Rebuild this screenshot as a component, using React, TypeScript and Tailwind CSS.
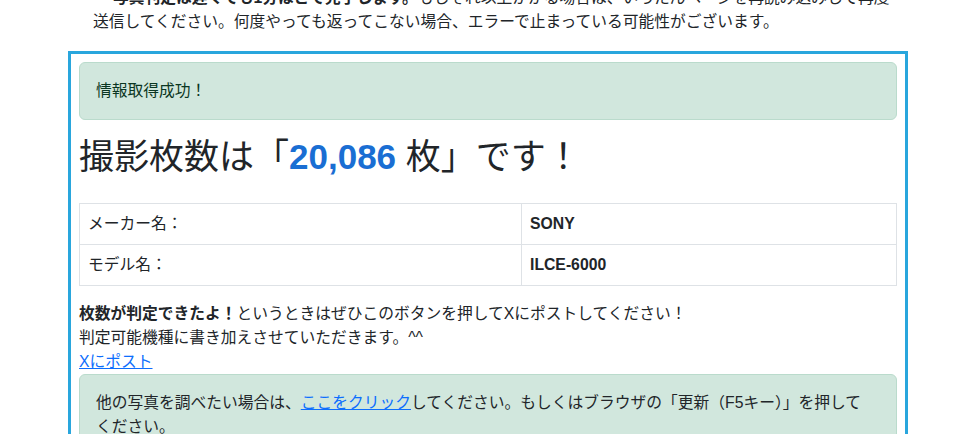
import type { ReactNode } from "react";

const FONT = "font-['Liberation_Sans','Noto_Sans_CJK_JP',sans-serif]";

function Alert({ children, className = "" }: { children: ReactNode; className?: string }) {
  return (
    <div
      className={`rounded-[6px] border border-[#badbcc] bg-[#d1e7dd] p-4 text-[#0a3622] ${className}`}
    >
      {children}
    </div>
  );
}

function InfoRow({ label, value }: { label: string; value: string }) {
  return (
    <tr>
      <td className="w-[442px] border border-[#dee2e6] px-2 py-2">{label}</td>
      <td className="border border-[#dee2e6] px-2 py-2 font-bold">{value}</td>
    </tr>
  );
}

export default function App() {
  return (
    <div className={`h-[434px] overflow-hidden bg-white text-[15.75px] leading-6 text-[#212529] ${FONT}`}>
      {/* notes list (scrolled partly out of view) */}
      <ul className="mt-[-14px] mb-[17px] ml-[93px]">
        <li>
          <span className="inline-block w-[20px]">•</span>
          <strong>写真判定は遅くても1分ほどで完了します。</strong>
          もしそれ以上かかる場合は、いったんページを再読み込みして再度
          <br />
          送信してください。何度やっても返ってこない場合、エラーで止まっている可能性がございます。
        </li>
      </ul>

      <div className="ml-[68px] w-[840px] border-[3px] border-[#29a6dd] px-2 pt-[8px] pb-2">
        <Alert>情報取得成功！</Alert>

        <h2 className="mt-4 mb-[25px] text-[35px] leading-[42px] font-normal">
          撮影枚数は「<span className="font-bold text-[#1a6ed3]">20,086</span> 枚」です！
        </h2>

        <table className="mb-4 w-full border-collapse">
          <tbody>
            <InfoRow label="メーカー名：" value="SONY" />
            <InfoRow label="モデル名：" value="ILCE-6000" />
          </tbody>
        </table>

        <p>
          <strong>枚数が判定できたよ！</strong>
          というときはぜひこのボタンを押してXにポストしてください！
          <br />
          判定可能機種に書き加えさせていただきます。^^
        </p>
        <div>
          <a href="#" className="text-[#0d6efd] underline">
            Xにポスト
          </a>
        </div>

        <Alert className="text-[#212529]">
          他の写真を調べたい場合は、
          <a href="#" className="text-[#0d6efd] underline">
            ここをクリック
          </a>
          してください。もしくはブラウザの「更新（F5キー）」を押して
          <br />
          ください。
        </Alert>
      </div>
    </div>
  );
}
